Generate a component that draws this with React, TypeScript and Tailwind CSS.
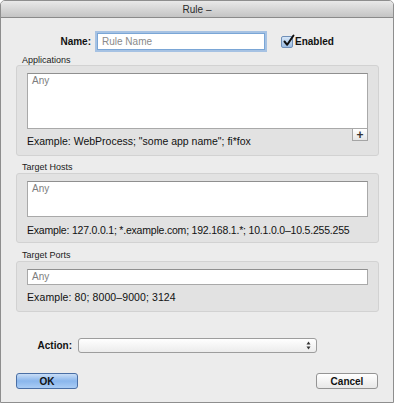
import React from "react";

const font = { fontFamily: '"Liberation Sans", Arial, sans-serif' };

function GroupLabel({ children, className = "" }: { children: React.ReactNode; className?: string }) {
  return (
    <div className={`pl-[21px] text-[9px] leading-[9px] text-[#1a1a1a] h-[9px] ${className}`}>{children}</div>
  );
}

export default function App() {
  return (
    <div className="w-[395px] h-[404px] bg-white" style={font}>
      <div className="w-[394px] h-[403px] border border-[#8e8e8e] rounded-t-[5px] bg-[#ececec] flex flex-col overflow-hidden">
        {/* title bar */}
        <div className="h-[17px] shrink-0 bg-gradient-to-b from-[#e9e9e9] to-[#c4c4c4] border-b border-[#8a8a8a] flex items-center justify-center text-[10px] text-[#2a2a2a]">
          Rule –
        </div>

        {/* Name row */}
        <div className="mt-[15px] h-[17px] flex items-center">
          <div className="w-[90px] text-right text-[10px] font-bold text-[#111]">Name:</div>
          <div className="ml-[6px] w-[168px] h-[17px] bg-white border border-[#7aa6d6] shadow-[0_0_0_2px_rgba(110,160,220,0.55)] flex items-center px-[4px] text-[10px] text-[#8a8a8a]">
            Rule Name
          </div>
          <div className="ml-[16px] flex items-center">
            <div className="w-[12px] h-[12px] rounded-[2px] border border-[#6f8fb8] bg-gradient-to-b from-[#d6e6f7] to-[#9cbde3] relative">
              <svg className="absolute -top-[3px] left-[0px]" width="13" height="14" viewBox="0 0 13 14">
                <path d="M2.5 7.5 L5.2 10.8 L11.5 1.5" fill="none" stroke="#111" strokeWidth="2" strokeLinecap="round" strokeLinejoin="round" />
              </svg>
            </div>
            <span className="ml-[2px] text-[10px] font-bold text-[#111]">Enabled</span>
          </div>
        </div>

        {/* Applications */}
        <GroupLabel className="mt-[6px]">Applications</GroupLabel>
        <div className="ml-[15px] w-[363px] h-[91px] shrink-0 rounded-[3px] border border-[#d2d2d2] bg-[#e2e2e2] px-[10px] pt-[7px] flex flex-col">
          <div className="h-[56px] bg-white border border-[#a9a9a9] border-t-[#8f8f8f] px-[4px] pt-[1px] text-[10px] leading-[12px] text-[#7d7d7d]">
            Any
          </div>
          <div className="flex justify-between">
            <div className="mt-[6px] text-[10.5px] leading-[13px] text-[#111]">Example: WebProcess; "some app name"; fi*fox</div>
            <div className="w-[16px] h-[12px] border border-[#a5a5a5] border-t-0 bg-gradient-to-b from-white to-[#e6e6e6] flex items-center justify-center text-[12px] leading-none font-bold text-[#333]">+</div>
          </div>
        </div>

        {/* Target Hosts */}
        <GroupLabel className="mt-[7px]">Target Hosts</GroupLabel>
        <div className="mt-[1px] ml-[15px] w-[363px] h-[70px] shrink-0 rounded-[3px] border border-[#d2d2d2] bg-[#e2e2e2] px-[10px] pt-[7px] flex flex-col">
          <div className="h-[36px] bg-white border border-[#a9a9a9] border-t-[#8f8f8f] px-[4px] pt-[1px] text-[10px] leading-[12px] text-[#7d7d7d]">
            Any
          </div>
          <div className="mt-[7px] text-[10.5px] leading-[13px] tracking-[-0.2px] text-[#111] whitespace-nowrap">Example: 127.0.0.1; *.example.com; 192.168.1.*; 10.1.0.0–10.5.255.255</div>
        </div>

        {/* Target Ports */}
        <GroupLabel className="mt-[8px]">Target Ports</GroupLabel>
        <div className="mt-[1px] ml-[15px] w-[363px] h-[51px] shrink-0 rounded-[3px] border border-[#d2d2d2] bg-[#e2e2e2] px-[10px] pt-[7px] flex flex-col">
          <div className="h-[16px] bg-white border border-[#a9a9a9] border-t-[#8f8f8f] px-[4px] text-[10px] leading-[14px] text-[#7d7d7d]">
            Any
          </div>
          <div className="mt-[6px] text-[10.5px] leading-[13px] tracking-[0.1px] text-[#111]">Example: 80; 8000–9000; 3124</div>
        </div>

        {/* Action */}
        <div className="mt-[26px] h-[15px] shrink-0 flex items-center">
          <div className="w-[71px] text-right text-[10px] font-bold text-[#111]">Action:</div>
          <div className="ml-[6px] w-[239px] h-[15px] rounded-[3px] border border-[#9d9d9d] bg-gradient-to-b from-white to-[#ececec] flex items-center justify-end pr-[5px]">
            <svg width="5" height="9" viewBox="0 0 5 9">
              <path d="M2.5 0.5 L4.5 3.5 L0.5 3.5 Z" fill="#333" />
              <path d="M2.5 8.5 L4.5 5.5 L0.5 5.5 Z" fill="#333" />
            </svg>
          </div>
        </div>

        {/* Buttons */}
        <div className="mt-[20px] px-[15px] flex justify-between shrink-0">
          <div className="w-[62px] h-[16px] rounded-[3px] border border-[#4a6fa5] bg-gradient-to-b from-[#c9ddf6] via-[#8ab6ec] to-[#a9ccf5] flex items-center justify-center text-[10px] font-bold text-[#111]">
            OK
          </div>
          <div className="w-[62px] h-[16px] rounded-[3px] border border-[#949494] bg-gradient-to-b from-white to-[#e8e8e8] flex items-center justify-center text-[10px] font-bold text-[#111]">
            Cancel
          </div>
        </div>
      </div>
    </div>
  );
}
